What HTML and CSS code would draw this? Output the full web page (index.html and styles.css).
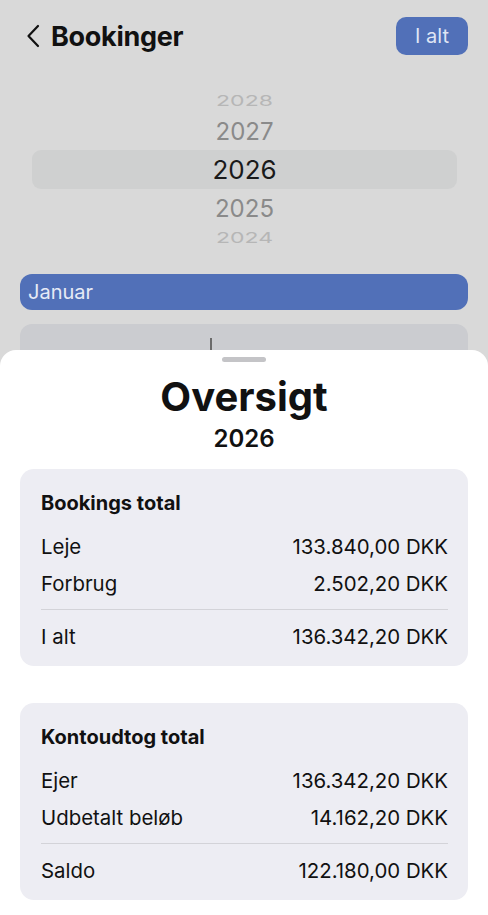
FILE: index.html
```html
<!DOCTYPE html>
<html lang="da">

<head>
    <meta charset="UTF-8">
    <title>Bookinger - Oversigt</title>
    <link rel="stylesheet" href="styles.css">
</head>

<body>
    <div class="screen">
        <!--topbar-->
        <header class="topbar">
            <div class="back">
                <svg class="chev" width="14" height="24" viewBox="0 0 14 24">
                    <path d="M12 2 L2.5 12 L12 22" fill="none" stroke="#111" stroke-width="2.2"
                        stroke-linecap="round" stroke-linejoin="round" />
                </svg>
                <h1 class="title">Bookinger</h1>
            </div>
            <button class="total-btn">I alt</button>
        </header>

        <!--year picker-->
        <div class="picker">
            <div class="yr yr-far">2028</div>
            <div class="yr yr-near">2027</div>
            <div class="yr yr-sel">2026</div>
            <div class="yr yr-near">2025</div>
            <div class="yr yr-far">2024</div>
        </div>

        <!--month-->
        <div class="month">Januar</div>
        <div class="panel">
            <span class="cursor"></span>
        </div>

        <!--sheet-->
        <section class="sheet">
            <div class="grabber"></div>
            <h2 class="sheet-title">Oversigt</h2>
            <div class="sheet-year">2026</div>

            <div class="card">
                <h3 class="card-title">Bookings total</h3>
                <div class="row"><span>Leje</span><span>133.840,00 DKK</span></div>
                <div class="row"><span>Forbrug</span><span>2.502,20 DKK</span></div>
                <div class="sep"></div>
                <div class="row"><span>I alt</span><span>136.342,20 DKK</span></div>
            </div>

            <div class="card">
                <h3 class="card-title">Kontoudtog total</h3>
                <div class="row"><span>Ejer</span><span>136.342,20 DKK</span></div>
                <div class="row"><span>Udbetalt beløb</span><span>14.162,20 DKK</span></div>
                <div class="sep"></div>
                <div class="row"><span>Saldo</span><span>122.180,00 DKK</span></div>
            </div>
        </section>
    </div>
</body>

</html>
```

FILE: styles.css
```css
html,
body,
h1,
h2,
h3 {
    margin: 0;
    padding: 0;
}

body {
    background: #d9d9d9;
    font-family: Inter, "Liberation Sans", sans-serif;
    color: #111;
}

.screen {
    position: relative;
    width: 488px;
    height: 915px;
    overflow: hidden;
}

/*topbar*/
.topbar {
    display: flex;
    justify-content: space-between;
    align-items: center;
    height: 38px;
    padding: 17px 20px 0 26px;
}

.back {
    display: flex;
    align-items: center;
    gap: 11px;
}

.chev {
    display: block;
}

.title {
    font-size: 27px;
    font-weight: 700;
    letter-spacing: -0.3px;
}

.total-btn {
    width: 72px;
    height: 38px;
    border: 0;
    border-radius: 10px;
    background: #5170b8;
    color: #dfe5f4;
    font: 400 20px Inter, "Liberation Sans", sans-serif;
}

/*year picker*/
.picker {
    display: flex;
    flex-direction: column;
    margin: 35px 31px 0 32px;
}

.yr {
    display: flex;
    align-items: center;
    justify-content: center;
}

.yr-far {
    height: 22px;
    font-size: 23px;
    color: #b6b6b6;
    transform: scaleY(0.62);
}

.yr-near {
    height: 38px;
    font-size: 24px;
    color: #8a8a8a;
}

.yr-sel {
    height: 39px;
    font-size: 26px;
    color: #1a1a1a;
    background: #cfd0d0;
    border-radius: 9px;
}

/*month*/
.month {
    margin: 25px 20px 0;
    height: 36px;
    padding-left: 8px;
    border-radius: 12px;
    background: #5170b8;
    color: #e6eaf6;
    font-size: 20px;
    line-height: 36px;
}

.panel {
    position: relative;
    margin: 14px 20px 0;
    height: 70px;
    border-radius: 12px;
    background: #cbccd0;
}

.cursor {
    position: absolute;
    left: 190px;
    top: 14px;
    width: 1.5px;
    height: 14px;
    background: #6b6b6b;
}

/*sheet*/
.sheet {
    position: absolute;
    top: 350px;
    left: 0;
    right: 0;
    bottom: 0;
    background: #fff;
    border-radius: 16px 16px 0 0;
}

.grabber {
    width: 44px;
    height: 5px;
    margin: 7px auto 0;
    border-radius: 3px;
    background: #c4c4c7;
}

.sheet-title {
    margin-top: 11px;
    text-align: center;
    font-size: 40px;
    line-height: 48px;
    font-weight: 700;
}

.sheet-year {
    margin-top: 3px;
    text-align: center;
    font-size: 24px;
    line-height: 30px;
    font-weight: 600;
}

.card {
    margin: 15px 20px 0;
    padding: 22px 20px 11px 21px;
    border-radius: 14px;
    background: #ededf3;
}

.card + .card {
    margin-top: 37px;
}

.card-title {
    font-size: 20px;
    line-height: 24px;
    font-weight: 700;
    margin-bottom: 13px;
}

.row {
    display: flex;
    justify-content: space-between;
    font-size: 20.4px;
    line-height: 37px;
}

.sep {
    height: 1px;
    margin: 7px 0 8px;
    background: #d3d3d8;
}
```
